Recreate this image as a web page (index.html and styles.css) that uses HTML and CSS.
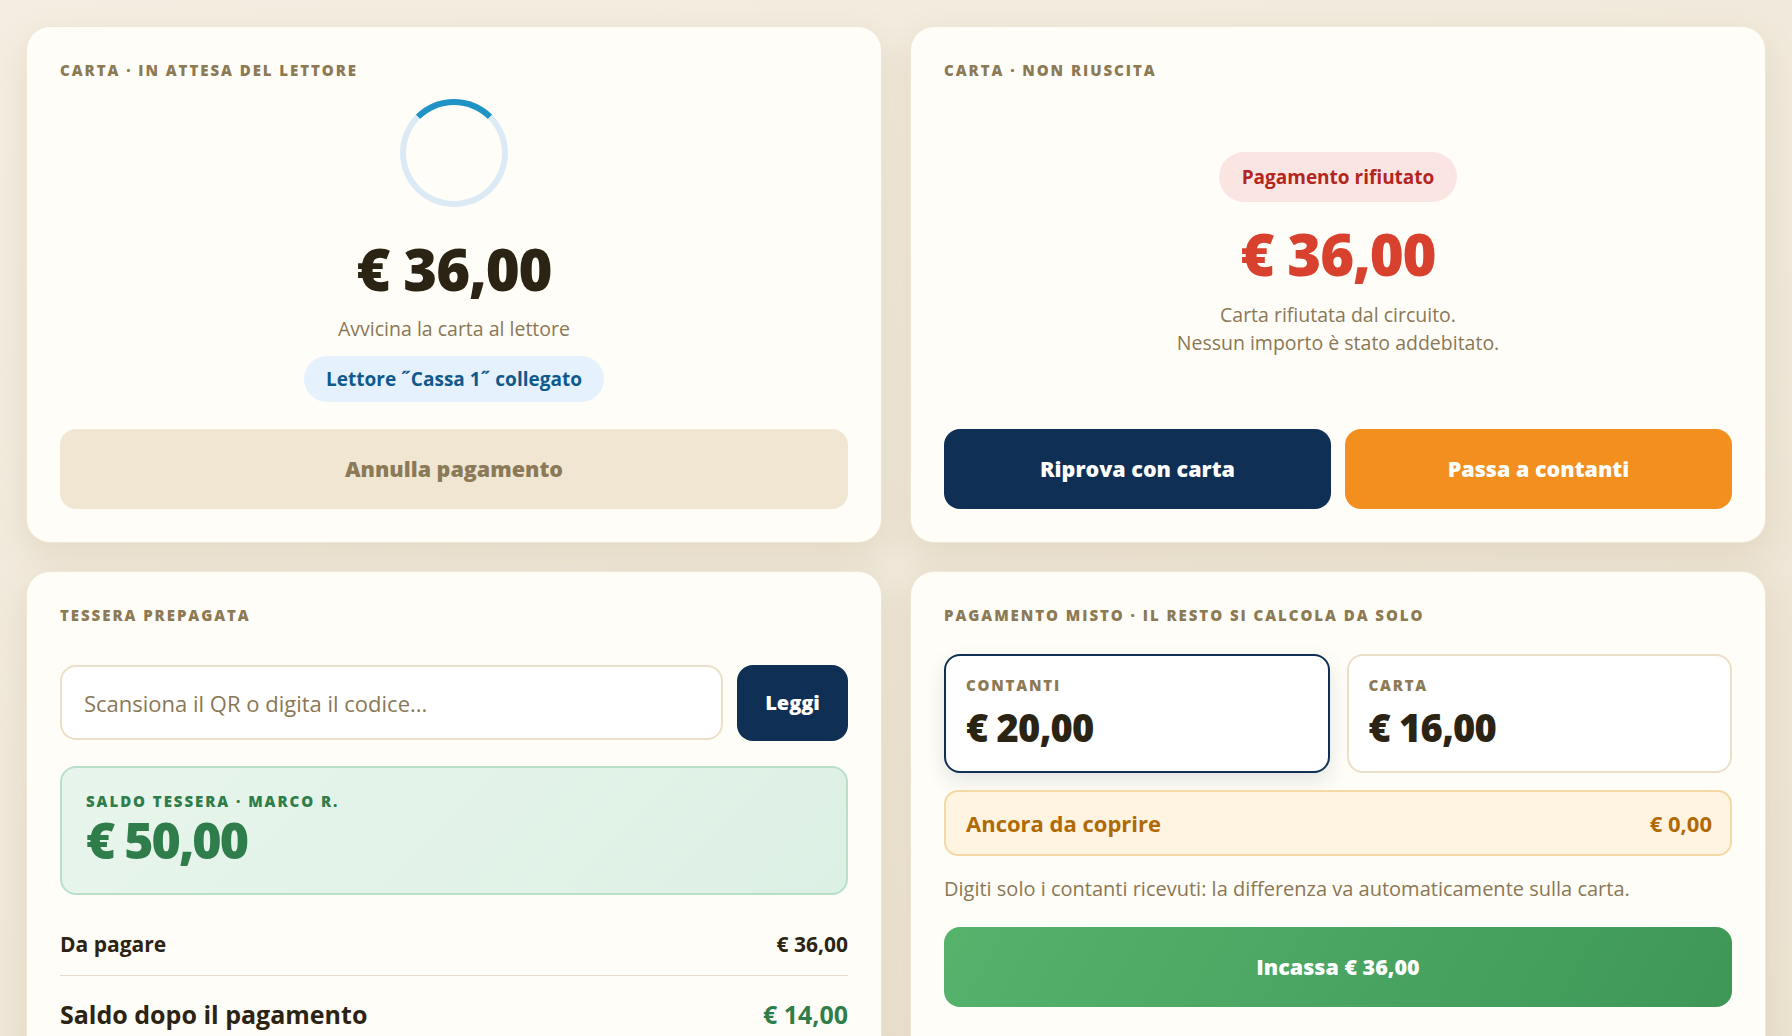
FILE: index.html
```html
<!DOCTYPE html>
<html lang="it">
<head>
<meta charset="utf-8">
<title>Pagamenti</title>
<link rel="stylesheet" href="styles.css">
</head>
<body>
<main class="grid">
  <section class="card">
    <div class="label">Carta · in attesa del lettore</div>
    <div class="center-col">
      <div class="spinner"></div>
      <div class="amount amount-xl">€ 36,00</div>
      <div class="hint">Avvicina la carta al lettore</div>
      <div class="pill pill-blue">Lettore ˝Cassa 1˝ collegato</div>
    </div>
    <button class="btn btn-cancel">Annulla pagamento</button>
  </section>

  <section class="card">
    <div class="label">Carta · non riuscita</div>
    <div class="center-col grow">
      <div class="pill pill-red">Pagamento rifiutato</div>
      <div class="amount amount-xl amount-red">€ 36,00</div>
      <div class="hint hint-2">Carta rifiutata dal circuito.<br>Nessun importo è stato addebitato.</div>
    </div>
    <div class="btn-row">
      <button class="btn btn-navy">Riprova con carta</button>
      <button class="btn btn-orange">Passa a contanti</button>
    </div>
  </section>

  <section class="card">
    <div class="label">Tessera prepagata</div>
    <div class="scan-row">
      <input class="scan-input" type="text" placeholder="Scansiona il QR o digita il codice...">
      <button class="btn btn-navy btn-read">Leggi</button>
    </div>
    <div class="balance">
      <div class="label label-green">Saldo tessera · Marco R.</div>
      <div class="amount amount-lg amount-green">€ 50,00</div>
    </div>
    <div class="lines">
      <div class="line">
        <span>Da pagare</span>
        <span class="line-val">€ 36,00</span>
      </div>
      <div class="line line-big">
        <span>Saldo dopo il pagamento</span>
        <span class="line-val green">€ 14,00</span>
      </div>
    </div>
  </section>

  <section class="card">
    <div class="label">Pagamento misto · il resto si calcola da solo</div>
    <div class="split">
      <div class="split-box active">
        <div class="label label-sm">Contanti</div>
        <div class="amount amount-md">€ 20,00</div>
      </div>
      <div class="split-box">
        <div class="label label-sm">Carta</div>
        <div class="amount amount-md">€ 16,00</div>
      </div>
    </div>
    <div class="remaining">
      <span>Ancora da coprire</span>
      <span>€ 0,00</span>
    </div>
    <p class="note">Digiti solo i contanti ricevuti: la differenza va automaticamente sulla carta.</p>
    <button class="btn btn-green">Incassa € 36,00</button>
  </section>
</main>
</body>
</html>
```

FILE: styles.css
```css
* { box-sizing: border-box; }

html, body {
  margin: 0;
  height: 100%;
}

body {
  font-family: "Open Sans", "Noto Sans", sans-serif;
  color: #2b2414;
  background: linear-gradient(160deg, #f4eee2 0%, #ece3d2 100%);
  overflow: hidden;
}

.grid {
  display: grid;
  grid-template-columns: 1fr 1fr;
  gap: 28px 28px;
  padding: 26px;
}

.card {
  background: #fffdf7;
  border: 1px solid #efe6d3;
  border-radius: 24px;
  padding: 33px 33px 33px;
  box-shadow: 0 12px 34px rgba(140, 110, 60, 0.14);
  display: flex;
  flex-direction: column;
}

.label {
  font-size: 15px;
  line-height: 20px;
  font-weight: 800;
  letter-spacing: 0.13em;
  text-transform: uppercase;
  color: #8c7a55;
}

.center-col {
  display: flex;
  flex-direction: column;
  align-items: center;
  text-align: center;
}

.grow {
  flex: 1;
  justify-content: center;
}

.spinner {
  width: 108px;
  height: 108px;
  margin-top: 19px;
  border-radius: 50%;
  border: 6px solid #dceaf6;
  border-top-color: #1f93c6;
}

.amount {
  font-weight: 800;
  letter-spacing: -0.02em;
  line-height: 1.1;
}

.amount-xl {
  font-size: 58px;
  margin-top: 30px;
}

.amount-red {
  color: #d9412f;
  margin-top: 20px;
}

.amount-lg {
  font-size: 50px;
  letter-spacing: -0.04em;
  color: #2e7d4a;
  margin-top: 2px;
}

.amount-md {
  font-size: 38px;
  margin-top: 12px;
}

.hint {
  font-size: 19.5px;
  line-height: 28px;
  color: #8a7755;
  margin-top: 14px;
}

.hint-2 {
  line-height: 28px;
  margin-top: 16px;
}

.pill {
  border-radius: 999px;
  font-weight: 700;
  font-size: 19px;
  line-height: 22px;
}

.pill-blue {
  background: #e5f1fc;
  color: #0f5a8c;
  padding: 12px 22px;
  margin-top: 13px;
}

.pill-red {
  background: #fbe5e3;
  color: #b3261e;
  padding: 14px 23px;
}

.btn {
  font-family: inherit;
  border: none;
  border-radius: 16px;
  height: 80px;
  font-size: 21.5px;
  font-weight: 800;
  cursor: pointer;
}

.btn-cancel {
  margin-top: 27px;
  background: #f1e6d2;
  color: #8a7a58;
}

.btn-row {
  display: grid;
  grid-template-columns: 1fr 1fr;
  gap: 14px;
}

.btn-navy {
  background: #0f2f55;
  color: #ffffff;
}

.btn-orange {
  background: #f28f1f;
  color: #ffffff;
}

.scan-row {
  display: flex;
  align-items: center;
  gap: 14px;
  margin-top: 40px;
}

.scan-input {
  flex: 1;
  height: 75px;
  border: 2px solid #ebdfc8;
  border-radius: 16px;
  background: #ffffff;
  padding: 0 22px;
  font-family: inherit;
  font-size: 22px;
  color: #2b2414;
  outline: none;
}

.scan-input::placeholder {
  color: #8a7755;
}

.btn-read {
  width: 111px;
  height: 76px;
  font-size: 20px;
}

.balance {
  margin-top: 25px;
  border: 2px solid #b8e0c6;
  border-radius: 16px;
  background: linear-gradient(135deg, #e8f5ec 0%, #ddf0e4 100%);
  padding: 23px 24px 25px;
}

.label-green {
  color: #2e7d4a;
}

.lines {
  margin-top: 18px;
}

.line {
  display: flex;
  justify-content: space-between;
  align-items: center;
  font-size: 21px;
  line-height: 28px;
  font-weight: 700;
  padding: 17px 0;
}

.line + .line {
  border-top: 1px solid #e6dccb;
}

.line-big {
  font-size: 25px;
  line-height: 36px;
  padding-top: 20px;
}

.green {
  color: #2e7d4a;
}

.split {
  margin-top: 29px;
  display: grid;
  grid-template-columns: 1fr 1fr;
  gap: 17px;
}

.split-box {
  height: 119px;
  border: 2px solid #ebdfc8;
  border-radius: 16px;
  background: #ffffff;
  padding: 19px 20px;
}

.split-box.active {
  border-color: #0f2f55;
  box-shadow: 0 8px 20px rgba(15, 47, 85, 0.12);
}

.label-sm {
  font-size: 15px;
  letter-spacing: 0.12em;
}

.remaining {
  margin-top: 17px;
  height: 66px;
  border: 2px solid #f4d9a6;
  border-radius: 14px;
  background: #fff3e1;
  color: #b06a05;
  padding: 0 18px 0 20px;
  display: flex;
  align-items: center;
  justify-content: space-between;
  font-size: 22px;
  font-weight: 700;
}

.note {
  margin: 19px 0 0;
  font-size: 20px;
  line-height: 28px;
  color: #8a7755;
}

.btn-green {
  margin-top: 24px;
  background: linear-gradient(120deg, #55b36c 0%, #3e9757 100%);
  color: #ffffff;
}
```
